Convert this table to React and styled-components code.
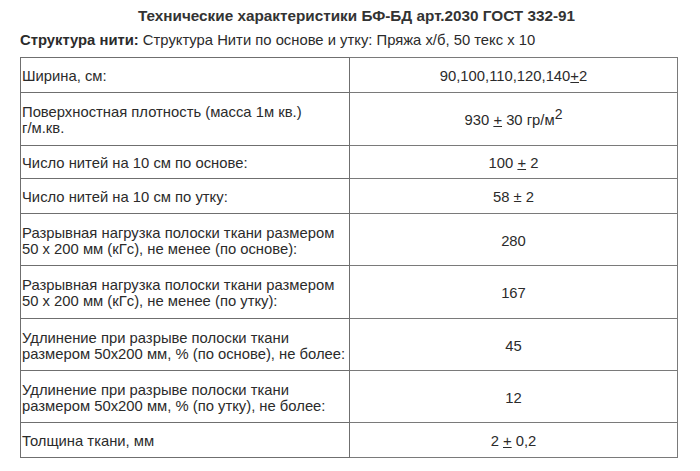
import React from "react";
import styled, { createGlobalStyle } from "styled-components";

const Global = createGlobalStyle`
  html, body { margin: 0; padding: 0; background: #fff; }
  body { font-family: "Liberation Sans", Arial, sans-serif; color: #2b2b2b; }
`;

const Page = styled.div`
  width: 700px;
  padding: 7px 22px 0 20px;
  box-sizing: border-box;
`;

const Title = styled.h1`
  margin: 0;
  padding-left: 15px;
  font-size: 15.3px;
  line-height: 17px;
  font-weight: bold;
  text-align: center;
  color: #333;
`;

const Subtitle = styled.p`
  margin: 8px 0 0;
  font-size: 14.8px;
  line-height: 17px;
  color: #2b2b2b;
`;

const Strong = styled.b`
  font-weight: bold;
`;

const Table = styled.table`
  margin-top: 8px;
  width: 658px;
  border-collapse: collapse;
  table-layout: fixed;
  font-size: 14.8px;
  line-height: 16px;
`;

const Row = styled.tr`
  height: ${(p) => p.$h}px;
`;

const LabelCell = styled.td`
  width: 327px;
  border: 1px solid #6f6f6f;
  padding: 2px 0 0 1px;
  vertical-align: middle;
  text-align: left;
  white-space: nowrap;
`;

const ValueCell = styled.td`
  border: 1px solid #7a7a7a;
  padding: 2px 2px 0;
  vertical-align: middle;
  text-align: center;
`;

const Pm = styled.u`
  text-decoration: underline;
  text-underline-offset: 1px;
`;

const Sup = styled.sup`
  font-size: 14px;
  line-height: 0;
  vertical-align: 6px;
`;

const rows = [
  { h: 35, label: "Ширина, см:", value: <>90,100,110,120,140<Pm>+</Pm>2</> },
  {
    h: 53,
    label: <>Поверхностная плотность (масса 1м кв.)<br />г/м.кв.</>,
    value: <>930 <Pm>+</Pm> 30 гр/м<Sup>2</Sup></>,
  },
  { h: 33, label: "Число нитей на 10 см по основе:", value: <>100 <Pm>+</Pm> 2</> },
  { h: 35, label: "Число нитей на 10 см по утку:", value: "58 ± 2" },
  {
    h: 52,
    label: <>Разрывная нагрузка полоски ткани размером<br />50 х 200 мм (кГс), не менее (по основе):</>,
    value: "280",
  },
  {
    h: 53,
    label: <>Разрывная нагрузка полоски ткани размером<br />50 х 200 мм (кГс), не менее (по утку):</>,
    value: "167",
  },
  {
    h: 52,
    label: <>Удлинение при разрыве полоски ткани<br />размером 50х200 мм, % (по основе), не более:</>,
    value: "45",
  },
  {
    h: 52,
    label: <>Удлинение при разрыве полоски ткани<br />размером 50х200 мм, % (по утку), не более:</>,
    value: "12",
  },
  { h: 35, label: "Толщина ткани, мм", value: <>2 <Pm>+</Pm> 0,2</> },
];

export default function App() {
  return (
    <>
      <Global />
      <Page>
        <Title>Технические характеристики БФ-БД арт.2030 ГОСТ 332-91</Title>
        <Subtitle>
          <Strong>Структура нити:</Strong> Структура Нити по основе и утку: Пряжа х/б, 50 текс х 10
        </Subtitle>
        <Table>
          <tbody>
            {rows.map((r, i) => (
              <Row key={i} $h={r.h}>
                <LabelCell>{r.label}</LabelCell>
                <ValueCell>{r.value}</ValueCell>
              </Row>
            ))}
          </tbody>
        </Table>
      </Page>
    </>
  );
}
